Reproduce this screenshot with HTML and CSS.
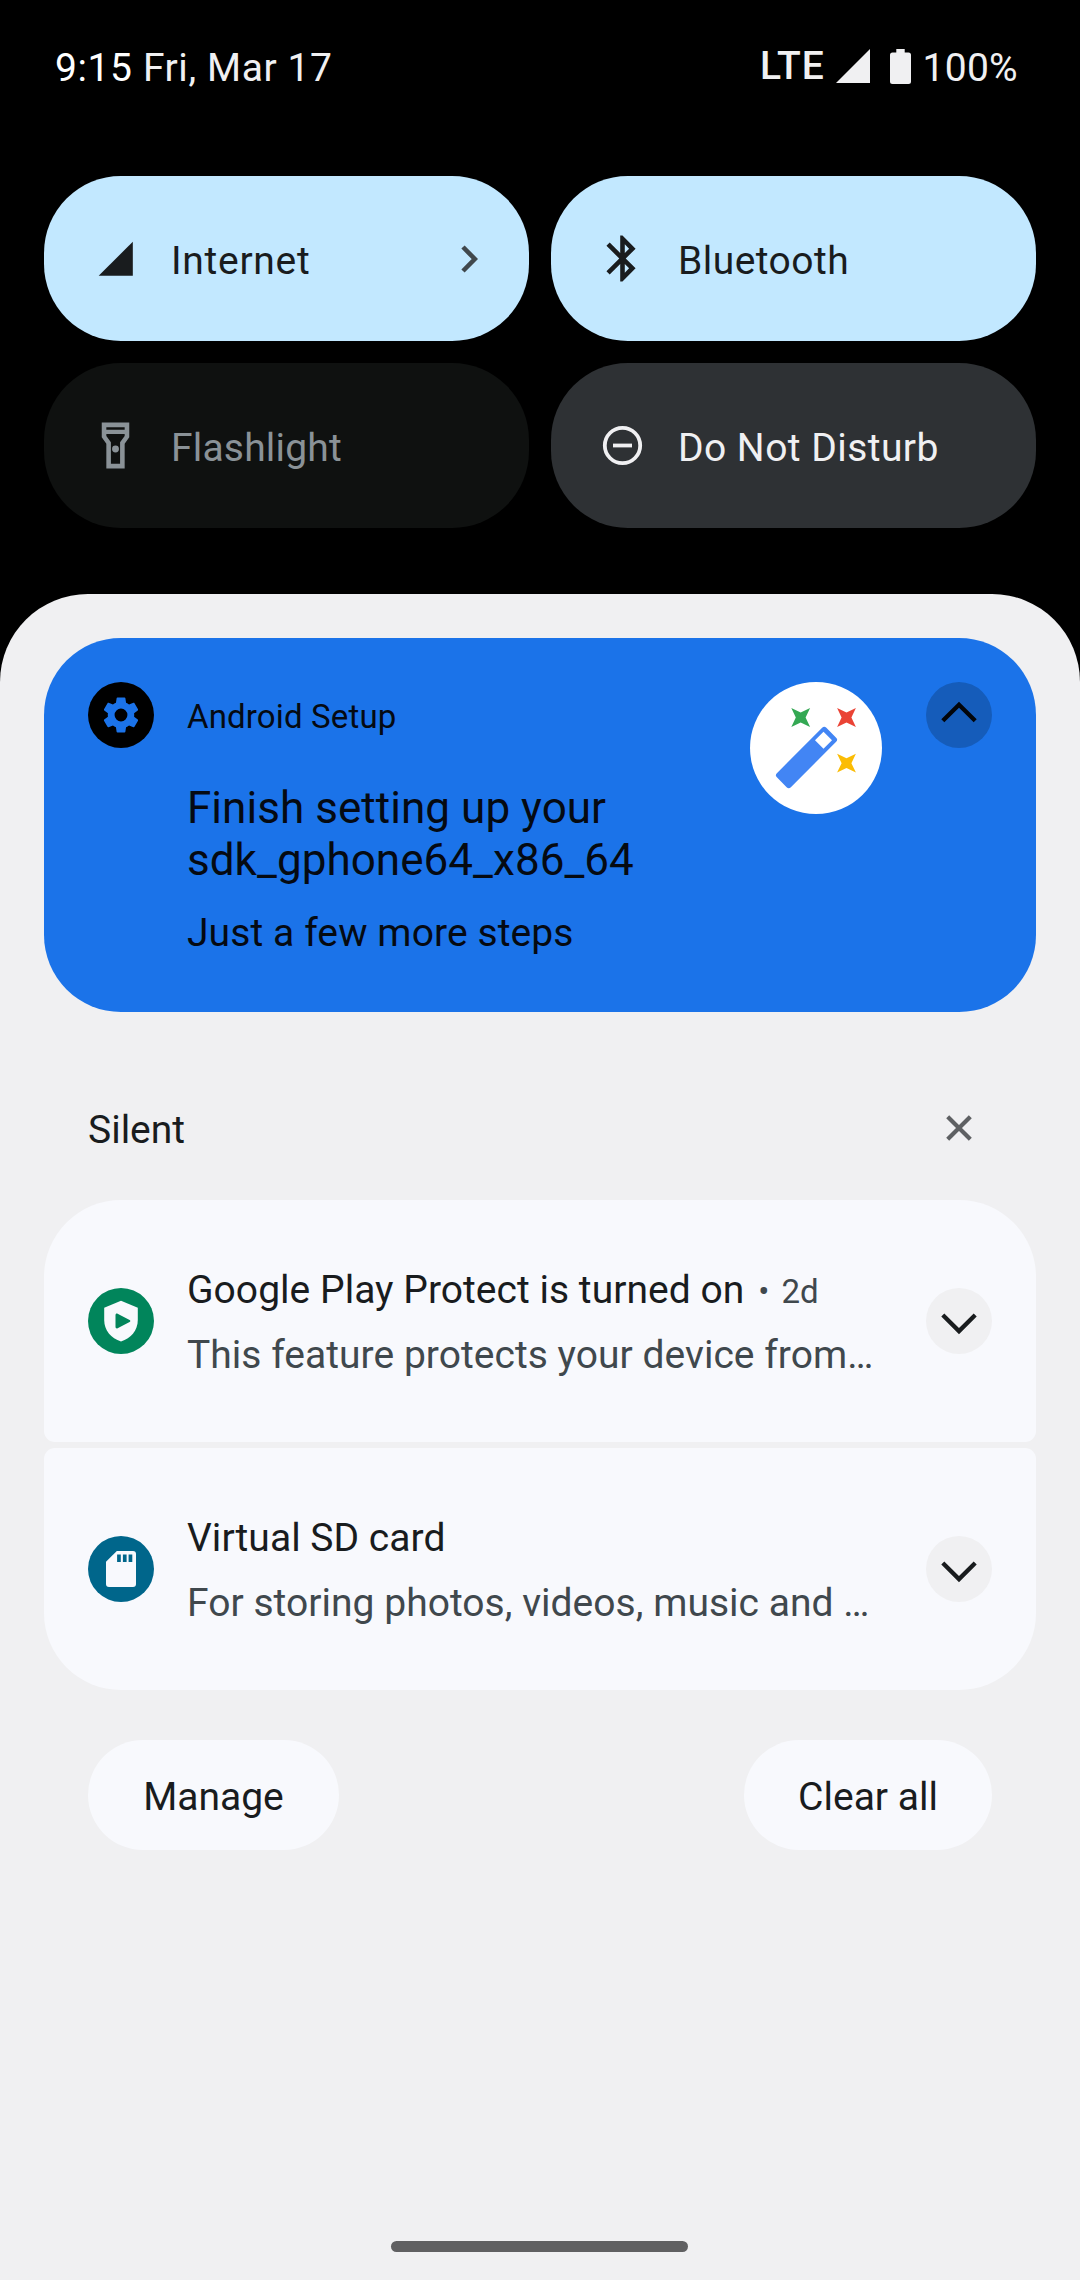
FILE: index.html
```html
<!DOCTYPE html>
<html lang="en">
<head>
<meta charset="utf-8">
<title>Notification shade</title>
<link rel="stylesheet" href="styles.css">
</head>
<body>
<header class="status">
  <div class="status-left"><span class="clock">9:15</span> Fri, Mar 17</div>
  <div class="status-right">
    <span class="network">LTE</span>
    <svg class="signal" viewBox="0 0 34 34"><path d="M34 0v34H0z"/></svg>
    <svg class="battery" viewBox="0 0 21 35"><path d="M6.300 0h8.400v3.500H18.500a2.500 2.500 0 0 1 2.500 2.500v26.500a2.500 2.500 0 0 1-2.500 2.500h-16A2.500 2.500 0 0 1 0 32.500V6a2.500 2.500 0 0 1 2.500-2.500h3.800z"/></svg>
    <span class="percent">100%</span>
  </div>
</header>

<section class="tiles">
  <div class="tile on internet">
    <svg class="tile-icon" viewBox="0 0 55 55"><path d="M44.800 10.700v34.100H10.700z"/></svg>
    <span class="tile-label">Internet</span>
    <svg class="tile-chevron" viewBox="0 0 17 28"><path d="M2 2l11.800 12L2 26"/></svg>
  </div>
  <div class="tile on">
    <svg class="tile-icon" viewBox="0 0 24 24"><path d="M17.710 7.710L12 2h-1v7.590L6.410 5 5 6.410 10.590 12 5 17.590 6.410 19 11 14.410V22h1l5.710-5.710-4.300-4.290 4.300-4.290zM13 5.830l1.880 1.880L13 9.590V5.830zm1.880 10.460L13 18.170v-3.760l1.880 1.880z"/></svg>
    <span class="tile-label">Bluetooth</span>
  </div>
  <div class="tile unavailable">
    <svg class="tile-icon" viewBox="0 0 24 24"><path fill-rule="evenodd" d="M6 2h12v6.400L16 11.200V22H8V11.200L6 8.400zM8 4v1.100h8V4zM8 7v.8l2 2.800V20h4v-9.400l2-2.800V7z"/><circle cx="12" cy="13.500" r="1.500"/></svg>
    <span class="tile-label">Flashlight</span>
  </div>
  <div class="tile off">
    <svg class="tile-icon" viewBox="0 0 55 55"><circle class="ring" cx="27.500" cy="27.500" r="17.700"/><path d="M18 25.600h19v3.800H18z"/></svg>
    <span class="tile-label">Do Not Disturb</span>
  </div>
</section>

<main class="shade">
  <article class="card setup">
    <svg class="badge" viewBox="0 0 66 66"><circle cx="33" cy="33" r="33" fill="#000"/><path fill="#1b73e9" transform="translate(11 11) scale(1.8333)" d="M19.140 12.940c.04-.3.060-.61.060-.94 0-.32-.02-.64-.07-.94l2.030-1.580c.18-.14.23-.41.120-.61l-1.920-3.320c-.12-.22-.37-.29-.59-.22l-2.390.96c-.5-.38-1.030-.7-1.620-.94l-.36-2.540c-.04-.24-.24-.41-.48-.41h-3.840c-.24 0-.43.17-.47.41l-.36 2.540c-.59.24-1.130.57-1.620.94l-2.390-.96c-.22-.08-.47 0-.59.22L2.740 8.870c-.12.21-.08.470.12.610l2.030 1.580c-.05.3-.09.63-.09.94s.02.64.07.94l-2.030 1.580c-.18.14-.23.41-.12.61l1.920 3.320c.12.22.37.29.59.22l2.390-.96c.5.38 1.030.7 1.620.94l.36 2.540c.05.24.24.41.48.41h3.840c.24 0 .44-.17.47-.41l.36-2.540c.59-.24 1.130-.56 1.620-.94l2.390.96c.22.08.47 0 .59-.22l1.920-3.320c.12-.22.07-.47-.12-.61l-2.010-1.580zM12 15.500a3.500 3.500 0 1 1 0-7 3.500 3.500 0 0 1 0 7z"/></svg>
    <div class="setup-text">
      <p class="app-name">Android Setup</p>
      <h2 class="setup-title">Finish setting up your<br>sdk_gphone64_x86_64</h2>
      <p class="setup-body">Just a few more steps</p>
    </div>
    <svg class="wand" viewBox="0 0 132 132">
      <defs><path id="spark" d="M-9.400-9.400L0-4.900l9.400-4.500L4.900 0l4.500 9.400L0 4.900l-9.400 4.500L-4.900 0z"/></defs>
      <circle cx="66" cy="66" r="66" fill="#fff"/>
      <use href="#spark" x="50.700" y="35.500" fill="#34a853"/>
      <use href="#spark" x="96.500" y="35.500" fill="#ea4335"/>
      <use href="#spark" x="96.500" y="81.200" fill="#fbbc04"/>
      <rect x="21.500" y="65.600" width="70" height="19.800" rx="3" fill="#4285f4" transform="rotate(-45 56.500 75.500)"/>
      <rect x="67.500" y="52.200" width="12" height="12" fill="#fff" transform="rotate(45 73.500 58.200)"/>
    </svg>
    <svg class="expand expand-dark" viewBox="0 0 66 66"><circle cx="33" cy="33" r="33"/><path d="M16.800 38.800L33 22.700l16.200 16.100"/></svg>
  </article>

  <div class="section-head">
    <span>Silent</span>
    <svg class="close" viewBox="0 0 26 26"><path d="M1.700 1.700l22.600 22.600M24.300 1.700L1.700 24.300"/></svg>
  </div>

  <div class="group">
    <article class="card note">
      <svg class="badge" viewBox="0 0 66 66"><circle cx="33" cy="33" r="33" fill="#01855b"/><path fill="#f8f9fd" d="M33 12.700l16.800 7V32c0 10-6.800 18.700-16.800 21.400C23 50.700 16.200 42 16.200 32V19.700z"/><path fill="#01855b" d="M27.500 27.200c0-1.300 1-1.900 2.100-1.400l12 6.200c1 .5 1 1.500 0 2l-12 6.200c-1.100.5-2.100-.1-2.100-1.400z"/></svg>
      <div class="note-text">
        <h3 class="note-title">Google Play Protect is turned on<span class="dot">•</span><span class="age">2d</span></h3>
        <p class="note-body">This feature protects your device from…</p>
      </div>
      <svg class="expand" viewBox="0 0 66 66"><circle cx="33" cy="33" r="33"/><path d="M16.800 27L33 43.100 49.200 27"/></svg>
    </article>
    <article class="card note">
      <svg class="badge" viewBox="0 0 66 66"><circle cx="33" cy="33" r="33" fill="#00668b"/><path fill="#f8f9fd" d="M28.800 15H45a3 3 0 0 1 3 3v30a3 3 0 0 1-3 3H21a3 3 0 0 1-3-3V25.800z"/><path fill="#00668b" d="M29.100 18.500h3.700V26h-3.700zM34.900 18.500h3.700V26h-3.700zM40.600 18.500h3.700V26h-3.700z"/></svg>
      <div class="note-text">
        <h3 class="note-title">Virtual SD card</h3>
        <p class="note-body">For storing photos, videos, music and …</p>
      </div>
      <svg class="expand" viewBox="0 0 66 66"><circle cx="33" cy="33" r="33"/><path d="M16.800 27L33 43.100 49.200 27"/></svg>
    </article>
  </div>

  <div class="actions">
    <button class="action manage">Manage</button>
    <button class="action clear">Clear all</button>
  </div>

  <div class="handle"></div>
</main>
</body>
</html>
```
FILE: styles.css
```css
* {
  box-sizing: border-box;
  margin: 0;
}

body {
  width: 1080px;
  height: 2280px;
  display: flex;
  flex-direction: column;
  background: #000;
  color: #191c1e;
  font-family: Roboto, sans-serif;
  font-size: 39px;
  line-height: 46px;
  font-weight: 400;
  overflow: hidden;
}

svg {
  display: block;
  flex: none;
}

h2, h3 {
  font-size: inherit;
  font-weight: 400;
}

/* Status bar */
.status {
  height: 176px;
  padding: 45px 62px 0 55px;
  display: flex;
  justify-content: space-between;
  align-items: flex-start;
  color: #f0f0f2;
}

.status-left {
  white-space: pre;
  letter-spacing: 0.6px;
}

.clock {
  color: #fff;
}

.status-right {
  display: flex;
  align-items: flex-start;
  fill: #f0f0f2;
}

.network {
  margin: -2px 12px 0 0;
  font-weight: 500;
  letter-spacing: 0.8px;
}

.signal {
  width: 34px;
  height: 34px;
  margin: 4px 20px 0 0;
}

.battery {
  width: 21px;
  height: 35px;
  margin: 4px 11px 0 0;
}

.percent {
  letter-spacing: 0.3px;
}

/* Quick settings */
.tiles {
  display: grid;
  grid-template-columns: 485px 485px;
  grid-auto-rows: 165px;
  gap: 22px;
  padding: 0 44px;
  height: 418px;
}

.tile {
  display: flex;
  align-items: center;
  padding: 0 51px 0 44px;
  border-radius: 77px;
}

.tile-icon {
  width: 55px;
  height: 55px;
  margin-right: 28px;
  fill: currentColor;
}

.tile-label {
  flex: 1;
  padding-top: 4px;
  letter-spacing: 0.45px;
}

.internet .tile-label {
  letter-spacing: 0.7px;
}

.unavailable .tile-label {
  letter-spacing: 0.2px;
}

.tile-chevron {
  width: 17px;
  height: 28px;
  fill: none;
  stroke: #40484d;
  stroke-width: 4.6;
}

.ring {
  fill: none;
  stroke: currentColor;
  stroke-width: 3.8;
}

.on {
  background: #c2e8ff;
}

.unavailable {
  background: #0f1110;
  color: #8a9297;
}

.off {
  background: #2e3134;
  color: #f0f0f2;
}

/* Notification shade */
.shade {
  flex: 1;
  display: flex;
  flex-direction: column;
  padding: 44px 44px 28px;
  background: #f0f0f2;
  border-radius: 88px 88px 0 0;
}

.card {
  display: flex;
  background: #f8f9fd;
}

.badge {
  width: 66px;
  height: 66px;
  margin-right: 33px;
}

.setup {
  height: 374px;
  padding: 44px;
  border-radius: 77px;
  background: #1b73e9;
  color: #050a12;
}

.setup-text {
  flex: 1;
}

.app-name {
  margin-top: 12px;
  font-size: 33px;
  letter-spacing: 0.15px;
}

.setup-title {
  margin-top: 42px;
  font-size: 44px;
  line-height: 52px;
  letter-spacing: 0.05px;
}

.setup-body {
  margin-top: 24px;
  letter-spacing: 0.1px;
}

.wand {
  width: 132px;
  height: 132px;
  margin-right: 44px;
}

.expand {
  width: 66px;
  height: 66px;
  fill: #f0f0f2;
  stroke: #191c1e;
  stroke-width: 4.3;
}

.expand circle {
  stroke: none;
}

.expand path {
  fill: none;
}

.expand-dark {
  fill: #155cba;
  stroke: #02050a;
}

.section-head {
  height: 188px;
  padding: 40px 64px 0 44px;
  display: flex;
  align-items: center;
  justify-content: space-between;
}

.section-head span {
  padding-top: 7px;
}

.close {
  width: 26px;
  height: 26px;
  margin-top: 4px;
  fill: none;
  stroke: #5e6063;
  stroke-width: 4.2;
}

.group {
  display: flex;
  flex-direction: column;
  gap: 6px;
}

.note {
  height: 242px;
  padding: 0 44px;
  align-items: center;
  border-radius: 11px;
}

.note:first-child {
  border-radius: 77px 77px 11px 11px;
}

.note:last-child {
  border-radius: 11px 11px 77px 77px;
}

.note-text {
  flex: 1;
  display: flex;
  flex-direction: column;
  gap: 19px;
  padding-top: 3px;
  white-space: nowrap;
  letter-spacing: 0.03px;
}

.note-title {
  height: 46px;
  display: flex;
  align-items: baseline;
}

.dot,
.age {
  color: #40484d;
  font-size: 33px;
}

.dot {
  padding: 0 12px 0 14px;
}

.note-body {
  color: #40484d;
}

.actions {
  display: flex;
  justify-content: space-between;
  padding: 50px 44px 0;
}

.action {
  height: 110px;
  padding: 3px 0 0;
  border: 0;
  border-radius: 55px;
  background: #f8f9fd;
  color: #191c1e;
  font: inherit;
}

.manage {
  width: 251px;
}

.clear {
  width: 248px;
}

.handle {
  width: 297px;
  height: 11px;
  margin: auto auto 0 347px;
  border-radius: 6px;
  background: #606062;
}
```
